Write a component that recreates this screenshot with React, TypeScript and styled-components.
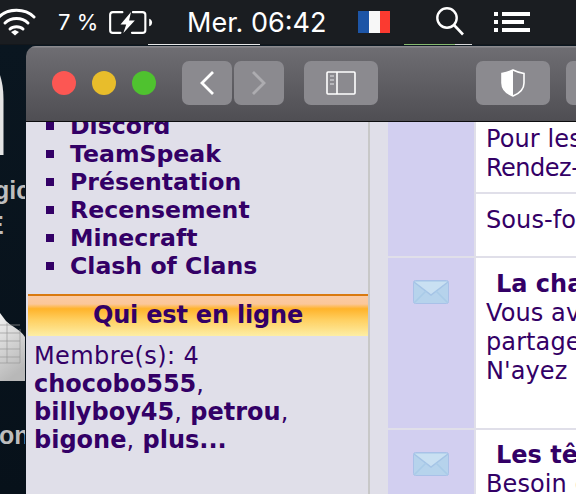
import React from "react";
import styled, { createGlobalStyle } from "styled-components";

const GlobalStyle = createGlobalStyle`
  html, body {
    margin: 0;
    padding: 0;
    background: #07121b;
    overflow: hidden;
  }
  * {
    box-sizing: border-box;
  }
`;

const menuLinks = ["TeamSpeak", "Présentation", "Recensement", "Minecraft", "Clash of Clans"];

function Envelope() {
  return (
    <EnvelopeSvg viewBox="0 0 36 24">
      <rect x="0.5" y="0.5" width="35" height="23" rx="2" fill="#b6d3ec" stroke="#a9c1e8" />
      <path d="M1 2 L18 15 L35 2" fill="#c9e0f2" stroke="#a5c4e6" strokeWidth="1.5" />
      <path d="M1 23 L13 11 M35 23 L23 11" fill="none" stroke="#a9cbe8" strokeWidth="1.5" />
    </EnvelopeSvg>
  );
}

export default function App() {
  return (
    <>
      <GlobalStyle />
      <Screen>
        <MenuBar>
          <WifiIcon viewBox="0 0 36 28">
            <g fill="none" stroke="#fff" strokeWidth="3" strokeLinecap="round">
              <path d="M-1 9 C8 0 25 0 34 9" />
              <path d="M5 15 C11 9 22 9 28 15" />
              <path d="M10 21 C13 18 20 18 23 21" />
            </g>
            <path d="M11 24 L15 22 L19 24 L15 27.5 Z" fill="#fff" />
          </WifiIcon>
          <Percent>7 %</Percent>
          <BatteryIcon viewBox="0 0 46 24">
            <g fill="none" stroke="#fff" strokeWidth="2.2" strokeLinecap="round">
              <path d="M14 1.2 H4 Q1.2 1.2 1.2 4 V20 Q1.2 22.8 4 22.8 H12" />
              <path d="M25 1.2 H35 Q38 1.2 38 4 V20 Q38 22.8 35 22.8 H24" />
            </g>
            <path d="M23 1 L12 14 H18 L15 23 L27 10 H21 Z" fill="#fff" />
            <path d="M42 8 Q45 9 45 12 Q45 15 42 16 Z" fill="#fff" />
          </BatteryIcon>
          <Clock>Mer. 06:42</Clock>
          <FlagIcon viewBox="0 0 32 22">
            <rect width="11" height="22" fill="#1d55a6" />
            <rect x="11" width="11" height="22" fill="#f7f7f7" />
            <rect x="22" width="10" height="22" fill="#fb3a30" />
          </FlagIcon>
          <SearchIcon viewBox="0 0 30 30">
            <circle cx="12" cy="11" r="9.7" fill="none" stroke="#fff" strokeWidth="2.4" />
            <path d="M19 18 L28 27.5" stroke="#fff" strokeWidth="2.6" />
          </SearchIcon>
          <ListIcon viewBox="0 0 36 21">
            <g fill="#fff">
              <rect x="0" y="0" width="4" height="4" />
              <rect x="8" y="0" width="28" height="4" />
              <rect x="0" y="8" width="4" height="4" />
              <rect x="8" y="8" width="22" height="4" />
              <rect x="0" y="16" width="4" height="4" />
              <rect x="8" y="16" width="28" height="4" />
            </g>
          </ListIcon>
        </MenuBar>
        <Glint />
        <Desktop>
          <DesktopIcons>
            <BlobIcon viewBox="0 0 4 80">
              <path d="M0 0 C2 6 3.5 14 3.5 24 V80 H0 Z" fill="#e4e4e4" />
            </BlobIcon>
            <DesktopLabel $top={131} $left={-6}>gic</DesktopLabel>
            <DesktopLabel $top={166} $left={-13}>E</DesktopLabel>
            <DocIcon viewBox="0 0 25 68">
              <defs>
                <linearGradient id="doc" x1="0" y1="0" x2="0.3" y2="1">
                  <stop offset="0" stopColor="#f2f2f2" />
                  <stop offset="1" stopColor="#b8b8b8" />
                </linearGradient>
              </defs>
              <path d="M0 0 L6 8 C12 14 20 16 25 24 V68 H0 Z" fill="url(#doc)" />
              <path
                d="M0 12 H20 M0 20 H20 M0 28 H20 M0 36 H20 M0 44 H20 M0 50 H20 M7 10 V50 M20 16 V50"
                stroke="#9a9a9a"
                strokeWidth="0.7"
                fill="none"
              />
            </DocIcon>
            <DesktopLabel $top={376} $left={-1}>on</DesktopLabel>
          </DesktopIcons>
          <BrowserWindow>
            <Toolbar>
              <Light $color="#fc5753" />
              <Light $color="#e8bd2b" />
              <Light $color="#4fc22f" />
              <NavGroup>
                <ToolButton $width={50}>
                  <svg width="16" height="26" viewBox="0 0 16 26">
                    <path d="M14 2 L3 13 L14 24" fill="none" stroke="#fff" strokeWidth="2.8" />
                  </svg>
                </ToolButton>
                <ToolButton $width={50}>
                  <svg width="16" height="26" viewBox="0 0 16 26">
                    <path d="M2 2 L13 13 L2 24" fill="none" stroke="#adacb0" strokeWidth="2.8" />
                  </svg>
                </ToolButton>
              </NavGroup>
              <SidebarButton $width={74}>
                <svg width="30" height="24" viewBox="0 0 30 24">
                  <rect x="1" y="1" width="28" height="22" rx="1" fill="none" stroke="#fff" strokeWidth="1.6" />
                  <path d="M11 1 V23" stroke="#fff" strokeWidth="1.6" />
                  <path d="M4 5 H8 M4 9 H8 M4 13 H8" stroke="#c8c8cc" strokeWidth="1.6" />
                </svg>
              </SidebarButton>
              <ShieldButton $width={74}>
                <svg width="24" height="28" viewBox="0 0 24 28">
                  <path d="M12 1 C16 3 20 4 23 4.5 V14 C23 21 17 25 12 27 C7 25 1 21 1 14 V4.5 C4 4 8 3 12 1 Z" fill="none" stroke="#fff" strokeWidth="1.6" />
                  <path d="M12 1 C8 3 4 4 1 4.5 V14 C1 21 7 25 12 27 Z" fill="#fff" />
                </svg>
              </ShieldButton>
              <NextButton $width={74} />
            </Toolbar>
            <Content>
              <Sidebar>
                <MenuList>
                  <MenuItem>Discord</MenuItem>
                  {menuLinks.map((e) => {
                    return <MenuItem key={e}>{e}</MenuItem>;
                  })}
                </MenuList>
                <PanelTitle>Qui est en ligne</PanelTitle>
                <OnlineList>
                  Membre(s): 4
                  <br />
                  <b>chocobo555</b>,
                  <br />
                  <b>billyboy45</b>, <b>petrou</b>,
                  <br />
                  <b>bigone</b>, <b>plus...</b>
                </OnlineList>
              </Sidebar>
              <Forum>
                <IconCell $span={2} />
                <TextCell $height={70} $top={3}>
                  Pour les membres
                  <br />
                  <TightLine>Rendez-vous ici</TightLine>
                </TextCell>
                <TextCell $height={62} $top={12}>
                  Sous-forums
                </TextCell>
                <IconCell>
                  <Envelope />
                </IconCell>
                <TextCell $height={170} $top={12}>
                  <ForumTitle>La chambre</ForumTitle>
                  Vous avez envie de
                  <br />
                  partager quelque chose
                  <br />
                  N'ayez pas peur
                </TextCell>
                <IconCell>
                  <Envelope />
                </IconCell>
                <TextCell $height={70} $top={11}>
                  <ForumTitle>Les têtes</ForumTitle>
                  Besoin d'aide
                </TextCell>
              </Forum>
            </Content>
          </BrowserWindow>
        </Desktop>
      </Screen>
    </>
  );
}

const Screen = styled.div`
  width: 576px;
  height: 494px;
  display: flex;
  flex-direction: column;
  overflow: hidden;
  font-family: "DejaVu Sans", sans-serif;
`;

const MenuBar = styled.header`
  height: 44px;
  flex-shrink: 0;
  display: flex;
  align-items: center;
  background: #1a1d21;
  color: #fff;
  font-family: Inter, "Liberation Sans", sans-serif;
`;

const WifiIcon = styled.svg`
  width: 36px;
  height: 28px;
  margin-top: 0;
  flex-shrink: 0;
`;

const Percent = styled.span`
  margin-left: 22px;
  width: 51px;
  font-size: 22px;
  white-space: nowrap;
`;

const BatteryIcon = styled.svg`
  width: 44px;
  height: 23px;
  flex-shrink: 0;
`;

const Clock = styled.span`
  margin-left: 34px;
  width: 171px;
  font-size: 27px;
  white-space: nowrap;
`;

const FlagIcon = styled.svg`
  width: 32px;
  height: 22px;
  flex-shrink: 0;
`;

const SearchIcon = styled.svg`
  width: 30px;
  height: 30px;
  margin-left: 45px;
  flex-shrink: 0;
`;

const ListIcon = styled.svg`
  width: 36px;
  height: 21px;
  margin-left: 29px;
  flex-shrink: 0;
`;

const Glint = styled.div`
  height: 1px;
  flex-shrink: 0;
  background: linear-gradient(
    to right,
    #14171b 148px,
    #e8e8e8 148px,
    #e8e8e8 260px,
    #14171b 260px,
    #14171b 404px,
    #86b86e 404px,
    #86b86e 455px,
    #d8d8d8 455px,
    #d8d8d8 472px,
    #14171b 472px
  );
`;

const Desktop = styled.main`
  position: relative;
  flex: 1;
  min-height: 0;
  display: flex;
  padding: 1px 0 0 26px;
  background: linear-gradient(to bottom, #0a1620, #07111a);
`;

const DesktopIcons = styled.div`
  position: absolute;
  top: 0;
  left: 0;
  bottom: 0;
  width: 25px;
  overflow: hidden;
`;

const BlobIcon = styled.svg`
  position: absolute;
  top: 30px;
  left: 0;
  width: 4px;
  height: 80px;
`;

const DocIcon = styled.svg`
  position: absolute;
  top: 268px;
  left: 0;
  width: 25px;
  height: 68px;
`;

const DesktopLabel = styled.span<{ $top: number; $left: number }>`
  position: absolute;
  top: ${(p) => p.$top}px;
  left: ${(p) => p.$left}px;
  font-family: "Liberation Sans", sans-serif;
  font-weight: 700;
  font-size: 25px;
  line-height: 28px;
  color: #bdbdbd;
  white-space: nowrap;
`;

const BrowserWindow = styled.section`
  width: 720px;
  flex-shrink: 0;
  display: flex;
  flex-direction: column;
  border-radius: 10px 10px 0 0;
  overflow: hidden;
`;

const Toolbar = styled.div`
  height: 76px;
  flex-shrink: 0;
  display: flex;
  align-items: center;
  gap: 16px;
  padding: 0 0 2px 26px;
  background: linear-gradient(to bottom, #6f6e73, #4f4e53);
  box-shadow: inset 0 1.5px 0 #8a898d;
  border-bottom: 1px solid #0c0c0e;
`;

const Light = styled.span<{ $color: string }>`
  width: 24px;
  height: 24px;
  border-radius: 50%;
  background: ${(p) => p.$color};
`;

const NavGroup = styled.div`
  display: flex;
  gap: 2px;
  margin-left: 10px;
`;

const ToolButton = styled.div<{ $width: number }>`
  width: ${(p) => p.$width}px;
  height: 44px;
  display: flex;
  align-items: center;
  justify-content: center;
  border-radius: 7px;
  background: #8b8a8f;
`;

const SidebarButton = styled(ToolButton)`
  margin-left: 4px;
`;

const ShieldButton = styled(ToolButton)`
  margin-left: 82px;
`;

const NextButton = styled(ToolButton)``;

const EnvelopeSvg = styled.svg`
  width: 36px;
  height: 24px;
  display: block;
`;

const Content = styled.div`
  flex: 1;
  min-height: 0;
  display: flex;
  background: #e0dfe9;
  color: #330066;
`;

const Sidebar = styled.aside`
  width: 344px;
  flex-shrink: 0;
  overflow: hidden;
  padding-left: 2px;
  border-right: 2px solid #c8c8c8;
  background: #e0dfe9;
  font-size: 24px;
  line-height: 28px;
`;

const MenuList = styled.ul`
  list-style: none;
  margin: -10px 0 14px;
  padding: 0 0 0 18px;
  font-size: 23.6px;
`;

const MenuItem = styled.li`
  display: flex;
  align-items: center;
  gap: 16px;
  height: 28px;
  font-weight: 700;
  white-space: nowrap;

  &::before {
    content: "";
    width: 8px;
    height: 8px;
    background: #330066;
  }
`;

const PanelTitle = styled.h2`
  height: 42px;
  margin: 0;
  border-top: 2px solid #d97a10;
  background: linear-gradient(to bottom, #fbcba3 0, #fbc79a 20%, #ffb32a 32%, #ffd062 60%, #fdeea5 100%);
  text-align: center;
  font-size: 24px;
  letter-spacing: -0.2px;
  line-height: 38px;
  font-weight: 700;
  white-space: nowrap;
`;

const OnlineList = styled.div`
  padding: 6px 0 0 6px;
  white-space: nowrap;
  letter-spacing: 0.4px;

  b {
    letter-spacing: 0;
  }
`;

const Forum = styled.div`
  flex: 1;
  min-width: 0;
  display: grid;
  grid-template-columns: 86px 1fr;
  grid-auto-rows: min-content;
  column-gap: 2px;
  row-gap: 2px;
  margin-left: 18px;
  font-size: 24px;
  letter-spacing: 0.1px;
  line-height: 29px;
`;

const IconCell = styled.div<{ $span?: number }>`
  grid-row: span ${(p) => p.$span || 1};
  display: flex;
  justify-content: center;
  padding-top: 22px;
  background: #d2cff0;
`;

const TextCell = styled.div<{ $height: number; $top: number }>`
  height: ${(p) => p.$height}px;
  padding: ${(p) => p.$top}px 0 0 10px;
  background: #fff;
  white-space: nowrap;
  overflow: hidden;
`;

const TightLine = styled.span`
  letter-spacing: -0.5px;
`;

const ForumTitle = styled.div`
  padding-left: 10px;
  font-weight: 700;
  letter-spacing: 0;
`;
